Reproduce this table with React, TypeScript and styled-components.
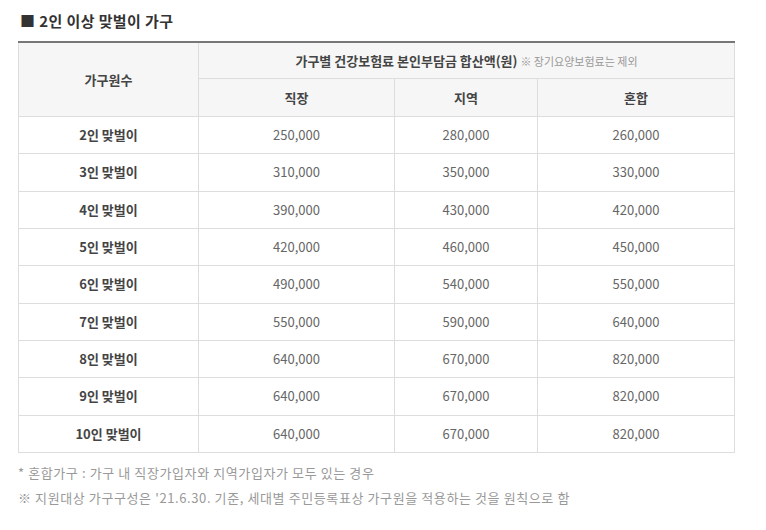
import React from 'react';
import styled, { createGlobalStyle } from 'styled-components';

const GlobalStyle = createGlobalStyle`
  body {
    margin: 0;
    background: #fff;
    font-family: 'Noto Sans CJK KR', 'Noto Sans', sans-serif;
    color: #333;
  }
`;

const rows = [
  ['2인 맞벌이', '250,000', '280,000', '260,000'],
  ['3인 맞벌이', '310,000', '350,000', '330,000'],
  ['4인 맞벌이', '390,000', '430,000', '420,000'],
  ['5인 맞벌이', '420,000', '460,000', '450,000'],
  ['6인 맞벌이', '490,000', '540,000', '550,000'],
  ['7인 맞벌이', '550,000', '590,000', '640,000'],
  ['8인 맞벌이', '640,000', '670,000', '820,000'],
  ['9인 맞벌이', '640,000', '670,000', '820,000'],
  ['10인 맞벌이', '640,000', '670,000', '820,000'],
];

export default function App() {
  return (
    <Wrapper>
      <GlobalStyle />
      <Title>■ 2인 이상 맞벌이 가구</Title>
      <Table>
        <colgroup>
          <col style={{ width: 180 }} />
          <col style={{ width: 196 }} />
          <col style={{ width: 143 }} />
          <col style={{ width: 197 }} />
        </colgroup>
        <thead>
          <tr>
            <HeadCell rowSpan={2}>가구원수</HeadCell>
            <HeadCell colSpan={3} $h={35}>
              가구별 건강보험료 본인부담금 합산액(원) <Note>※ 장기요양보험료는 제외</Note>
            </HeadCell>
          </tr>
          <tr>
            <HeadCell $h={37}>직장</HeadCell>
            <HeadCell $h={37}>지역</HeadCell>
            <HeadCell $h={37}>혼합</HeadCell>
          </tr>
        </thead>
        <tbody>
          {rows.map(([label, ...vals]) => (
            <tr key={label}>
              <LabelCell>{label}</LabelCell>
              {vals.map((v, i) => (
                <ValueCell key={i}>{v}</ValueCell>
              ))}
            </tr>
          ))}
        </tbody>
      </Table>
      <Footnotes>
        <p>* 혼합가구 : 가구 내 직장가입자와 지역가입자가 모두 있는 경우</p>
        <p>※ 지원대상 가구구성은 '21.6.30. 기준, 세대별 주민등록표상 가구원을 적용하는 것을 원칙으로 함</p>
      </Footnotes>
    </Wrapper>
  );
}

const Wrapper = styled.div`
  width: 716px;
  padding: 10px 0 0 18px;
`;

const Title = styled.h2`
  margin: 0 0 10px 2px;
  font-size: 15px;
  line-height: 21px;
  font-weight: 700;
  letter-spacing: 0.4px;
  color: #333;
`;

const Table = styled.table`
  width: 716px;
  border-collapse: collapse;
  table-layout: fixed;
  border-top: 2px solid #777;
  font-size: 13px;
`;

const HeadCell = styled.th<{ $h?: number }>`
  height: ${(p) => (p.$h ? `${p.$h}px` : 'auto')};
  padding: 0;
  background: #f6f6f6;
  border: 1px solid #ddd;
  border-top: none;
  font-weight: 700;
  color: #444;
  text-align: center;
  vertical-align: middle;
  line-height: 18px;
`;

const Note = styled.span`
  font-size: 11px;
  font-weight: 400;
  color: #999;
`;

const LabelCell = styled.td`
  height: 36.33px;
  padding: 0;
  border: 1px solid #ddd;
  text-align: center;
  font-weight: 700;
  color: #444;
  line-height: 18px;
`;

const ValueCell = styled.td`
  padding: 0;
  border: 1px solid #ddd;
  text-align: center;
  color: #666;
  line-height: 18px;
`;

const Footnotes = styled.div`
  margin-top: 10px;
  font-size: 13px;
  letter-spacing: 0.6px;
  color: #999;

  p {
    margin: 0 0 6px;
    line-height: 19px;
  }
`;
